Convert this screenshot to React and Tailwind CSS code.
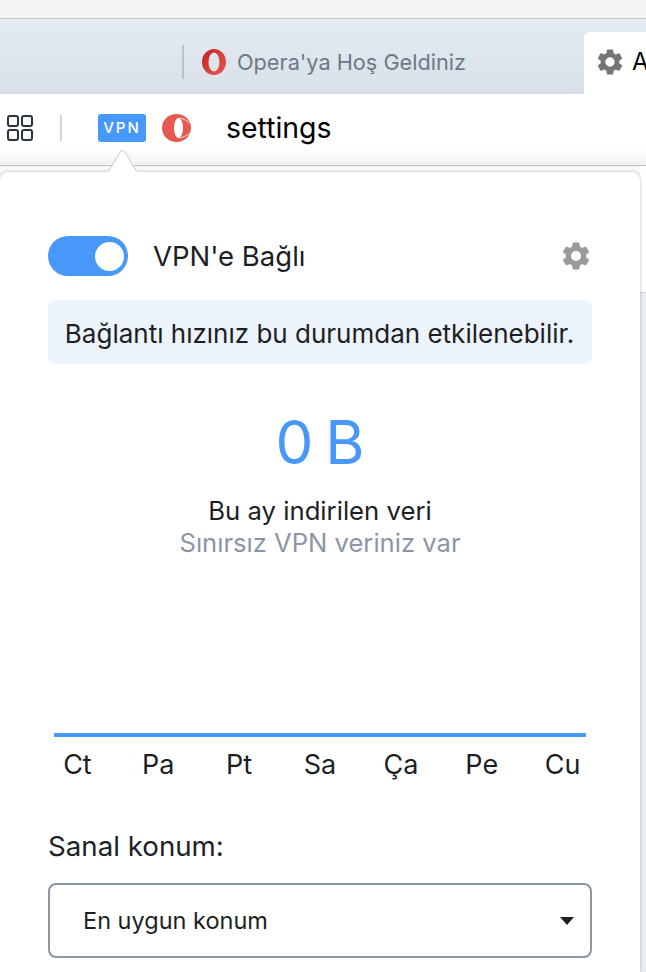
const days = ['Ct', 'Pa', 'Pt', 'Sa', 'Ça', 'Pe', 'Cu'];

const GEAR_PATH =
    'M19.14 12.94c.04-.3.06-.61.06-.94s-.02-.64-.07-.94l2.03-1.58a.5.5 0 0 0 .12-.61l-1.92-3.32a.5.5 0 0 0-.59-.22l-2.39.96a7 7 0 0 0-1.62-.94l-.36-2.54a.48.48 0 0 0-.48-.41h-3.84a.48.48 0 0 0-.47.41l-.36 2.54c-.59.24-1.13.56-1.62.94l-2.39-.96a.49.49 0 0 0-.59.22L2.74 8.87a.48.48 0 0 0 .12.61l2.03 1.58c-.05.3-.09.63-.09.94s.02.64.07.94l-2.03 1.58a.5.5 0 0 0-.12.61l1.92 3.32c.12.22.37.29.59.22l2.39-.96c.5.38 1.03.7 1.62.94l.36 2.54c.05.24.24.41.48.41h3.84c.24 0 .44-.17.47-.41l.36-2.54c.59-.24 1.13-.56 1.62-.94l2.39.96c.22.08.47 0 .59-.22l1.92-3.32a.48.48 0 0 0-.12-.61zM12 15.6a3.6 3.6 0 1 1 0-7.2 3.6 3.6 0 0 1 0 7.2z';

function Gear({ className }) {
    return (
        <svg viewBox="2 2 20 20" className={className} fill="currentColor">
            <path d={GEAR_PATH} />
        </svg>
    );
}

function OperaTabIcon() {
    return (
        <svg viewBox="0 0 24 26" className="h-[26px] w-[24px] shrink-0">
            <defs>
                <linearGradient id="tabO" x1="0" y1="0" x2="1" y2="1">
                    <stop offset="0" stopColor="#c4201f" />
                    <stop offset="1" stopColor="#ea5a52" />
                </linearGradient>
            </defs>
            <path
                fillRule="evenodd"
                fill="url(#tabO)"
                d="M12 0a12 13 0 1 0 0 26a12 13 0 1 0 0-26zM12 3.5a5.5 9.5 0 1 1 0 19a5.5 9.5 0 1 1 0-19z"
            />
        </svg>
    );
}

function OperaVpnIcon() {
    return (
        <svg viewBox="0 0 29 28" className="h-[28px] w-[29px] shrink-0">
            <ellipse cx="14.5" cy="14" rx="14.5" ry="14" fill="#e5594f" />
            <ellipse cx="16.5" cy="14" rx="4.5" ry="10" fill="#fff" />
            <path d="M17 4.2C21 4.5 24.5 6 27.5 9" fill="none" stroke="#fff" strokeWidth="0.8" />
            <path d="M17 23.8C21 23.5 24.5 22 27.5 19" fill="none" stroke="#fff" strokeWidth="0.8" />
        </svg>
    );
}

function GridIcon() {
    return (
        <svg viewBox="0 0 26 26" className="h-[26px] w-[26px] shrink-0" fill="none" stroke="#2a3240" strokeWidth="2">
            <rect x="1" y="1" width="10" height="10" rx="2" />
            <rect x="15" y="1" width="10" height="10" rx="2" />
            <rect x="1" y="15" width="10" height="10" rx="2" />
            <rect x="15" y="15" width="10" height="10" rx="2" />
        </svg>
    );
}

export default function App() {
    return (
        <div className="flex h-[972px] w-[646px] flex-col overflow-hidden bg-[#f7f7f7] font-['Inter',sans-serif] text-[#1c1f24]">
            <div className="h-[19px] shrink-0 border-b border-[#c9c9c9] bg-[#f4f4f4]" />

            <div className="flex h-[75px] shrink-0 items-end overflow-hidden bg-gradient-to-b from-[#e5ebf2] to-[#dae0e7] pl-[182px]">
                <div className="mb-[15px] flex h-[34px] w-[402px] shrink-0 items-center">
                    <div className="h-[34px] w-[2px] bg-[#b9c2cd]" />
                    <div className="ml-[18px]">
                        <OperaTabIcon />
                    </div>
                    <span className="ml-[11px] text-[21.7px] text-[#6d7989]">Opera'ya Hoş Geldiniz</span>
                </div>
                <div className="flex h-[62px] w-[80px] shrink-0 items-center rounded-tl-[6px] bg-white pb-[2px] pl-[13px]">
                    <Gear className="h-[26px] w-[26px] shrink-0 text-[#757575]" />
                    <span className="ml-[9px] text-[24px] text-black">A</span>
                </div>
            </div>

            <div className="flex h-[72px] shrink-0 items-center border-b border-[#b9c2cd] bg-gradient-to-b from-white from-75% to-[#f2f2f2] pb-[3px]">
                <div className="ml-[7px]">
                    <GridIcon />
                </div>
                <div className="ml-[27px] h-[26px] w-[2px] bg-[#d4d4d4]" />
                <div className="ml-[36px] flex h-[28px] w-[48px] items-center justify-center rounded-[3px] bg-[#4798f8] text-[15px] font-medium tracking-[2px] text-white">
                    VPN
                </div>
                <div className="ml-[16px]">
                    <OperaVpnIcon />
                </div>
                <span className="ml-[35px] text-[28.4px] text-black">settings</span>
            </div>

            <div className="flex flex-1">
                <div className="relative mt-[6px] flex w-[640px] flex-col rounded-t-[8px] bg-white px-[48px] pt-[64px] shadow-[0_0_3px_rgba(0,0,0,0.3)]">
                    <svg viewBox="0 0 29 22" className="absolute left-[108px] top-[-22px] h-[22px] w-[29px]">
                        <path d="M0 22 12.5 1.500q2-2 4 0l12.500 20.500z" fill="#fff" stroke="#c4c9d0" strokeWidth="1" />
                        <rect x="0" y="21" width="29" height="2" fill="#fff" />
                    </svg>

                    <div className="flex h-[40px] items-center">
                        <div className="flex h-[40px] w-[80px] items-center justify-end rounded-full bg-[#4798f8] pr-[4px]">
                            <div className="h-[29px] w-[29px] rounded-full bg-white" />
                        </div>
                        <span className="ml-[25px] pt-[2px] text-[27.5px]">VPN'e Bağlı</span>
                        <Gear className="ml-auto mr-[2px] h-[28px] w-[28px] text-[#9a9a9a]" />
                    </div>

                    <div className="mt-[24px] flex h-[64px] items-center justify-center rounded-[8px] bg-[#edf3fa] pr-[1px] pt-[3px] text-[26px]">
                        Bağlantı hızınız bu durumdan etkilenebilir.
                    </div>

                    <div className="mt-[40px] text-center text-[60px] leading-[76px] text-[#4798f8] [word-spacing:-5px]">0 B</div>
                    <div className="mt-[15px] text-center text-[25.7px] leading-[32px]">Bu ay indirilen veri</div>
                    <div className="text-center text-[25.6px] leading-[32px] text-[#8b96a5]">Sınırsız VPN veriniz var</div>

                    <div className="mx-[6px] mt-[174px] h-[4px] bg-[#4798f8]" />
                    <div className="-mx-[11px] mt-[10px] grid grid-cols-7 text-center text-[27px] leading-[36px]">
                        {days.map((day) => (
                            <span key={day}>{day}</span>
                        ))}
                    </div>

                    <div className="mt-[45px] text-[27.7px] leading-[36px]">Sanal konum:</div>
                    <div className="mt-[19px] flex h-[75px] items-center justify-between rounded-[8px] border-2 border-[#8a96a3] pl-[33px] pr-[16px] text-[23.5px]">
                        <span>En uygun konum</span>
                        <svg viewBox="0 0 14 8" className="h-[8px] w-[14px]">
                            <path d="M0 0h14L7 8z" fill="#1c1f24" />
                        </svg>
                    </div>
                </div>

                <div className="flex flex-1 flex-col">
                    <div className="h-[126px] bg-white" />
                    <div className="flex-1 border-t border-[#cfd6df] bg-[#e9edf2]" />
                </div>
            </div>
        </div>
    );
}
